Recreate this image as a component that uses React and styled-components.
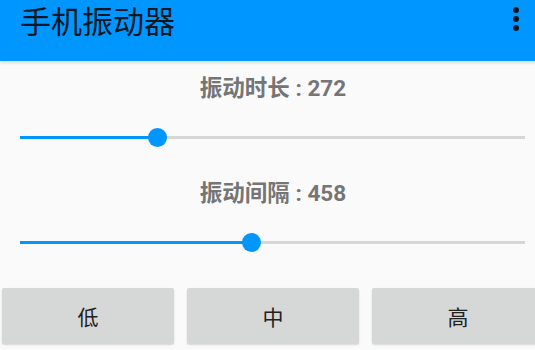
import React from 'react'
import styled, { createGlobalStyle } from 'styled-components'

const GlobalStyle = createGlobalStyle`
  html, body {
    margin: 0;
    padding: 0;
    background: #fafafa;
    overflow: hidden;
  }
  body {
    font-family: Roboto, "Noto Sans CJK SC", sans-serif;
  }
`

const Screen = styled.div`
  width: 546px;
  height: 350px;
  background: #fafafa;
  overflow: hidden;
`

const AppBar = styled.header`
  display: flex;
  justify-content: space-between;
  align-items: flex-start;
  height: 61px;
  box-sizing: border-box;
  padding-top: 2px;
  background: #0096ff;
  box-shadow: 0 2px 3px rgba(0, 0, 0, 0.12);
  position: relative;
  z-index: 1;
`

const Title = styled.h1`
  margin: 0;
  padding-left: 20px;
  font-family: "Noto Sans CJK SC", sans-serif;
  font-weight: 400;
  font-size: 31px;
  line-height: 36px;
  color: #0b1722;
`

const MenuButton = styled.div`
  width: 60px;
  display: flex;
  justify-content: center;
  padding-top: 4px;
`

const Section = styled.section`
  display: flex;
  flex-direction: column;
  align-items: center;
  margin-top: ${p => p.$top}px;
`

const Label = styled.div`
  font-family: Roboto, "Noto Sans CJK SC", sans-serif;
  font-weight: 700;
  font-size: 22.5px;
  line-height: 28px;
  color: #757575;
`

const SliderRow = styled.div`
  align-self: stretch;
  height: 36px;
  margin-top: 17.5px;
  padding: 0 21px 0 20px;
  display: flex;
  align-items: center;
`

const Track = styled.div`
  position: relative;
  flex: 1;
  height: 3px;
  background: #d6d6d6;
`

const Fill = styled.div`
  height: 100%;
  background: #0096ff;
`

const Thumb = styled.div`
  position: absolute;
  top: 50%;
  width: 19px;
  height: 19px;
  margin: -9.5px 0 0 -9.5px;
  border-radius: 50%;
  background: #0096ff;
`

const ButtonBar = styled.div`
  display: grid;
  grid-template-columns: repeat(3, 1fr);
  gap: 13px;
  padding: 0 2px;
  margin-top: 28px;
`

const LevelButton = styled.button`
  height: 56px;
  border: none;
  border-radius: 2px;
  background: #d6d7d7;
  box-shadow: 0 1px 2px rgba(0, 0, 0, 0.15);
  font-family: "Noto Sans CJK SC", sans-serif;
  font-size: 21px;
  color: #222;
  padding: 0;
`

function Slider({ value, max }) {
  const pct = (value / max) * 100
  return (
    <SliderRow>
      <Track>
        <Fill style={{ width: `${pct}%` }} />
        <Thumb style={{ left: `${pct}%` }} />
      </Track>
    </SliderRow>
  )
}

export default function App() {
  return (
    <Screen>
      <GlobalStyle />
      <AppBar>
        <Title>手机振动器</Title>
        <MenuButton>
          <svg width="8" height="28" viewBox="0 0 8 28">
            <circle cx="4" cy="4" r="3" fill="#0b1722" />
            <circle cx="4" cy="13" r="3" fill="#0b1722" />
            <circle cx="4" cy="22" r="3" fill="#0b1722" />
          </svg>
        </MenuButton>
      </AppBar>
      <Section $top={13}>
        <Label>振动时长 : 272</Label>
        <Slider value={272} max={1000} />
      </Section>
      <Section $top={23}>
        <Label>振动间隔 : 458</Label>
        <Slider value={458} max={1000} />
      </Section>
      <ButtonBar>
        <LevelButton>低</LevelButton>
        <LevelButton>中</LevelButton>
        <LevelButton>高</LevelButton>
      </ButtonBar>
    </Screen>
  )
}
